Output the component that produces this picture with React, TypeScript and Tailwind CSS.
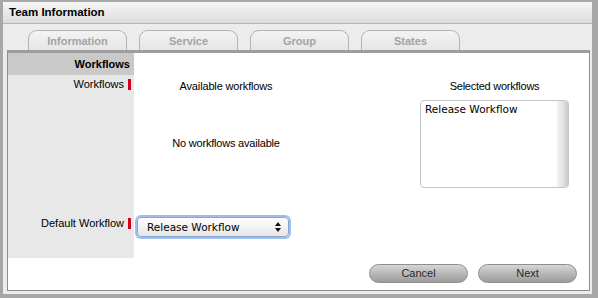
import React from "react";

const sans = { fontFamily: '"Liberation Sans", Arial, sans-serif' };
const lucida = { fontFamily: '"DejaVu Sans", "Liberation Sans", sans-serif' };

function Tab({ label }: { label: string }) {
  return (
    <div
      className="w-[99px] h-[20px] pt-[2px] rounded-t-[9px] border border-b-0 border-[#b4b4b4] bg-gradient-to-b from-[#f3f3f3] to-[#e6e6e6] flex items-center justify-center text-[11px] font-bold text-[#a3a3a3] leading-none"
      style={sans}
    >
      {label}
    </div>
  );
}

function Btn({ label }: { label: string }) {
  return (
    <div
      className="w-[99px] h-[19px] rounded-full border border-[#8f8f8f] bg-gradient-to-b from-[#d6d6d6] via-[#b8b8b8] to-[#9c9c9c] flex items-center justify-center text-[11px] text-[#2a2a2a] leading-none"
      style={sans}
    >
      {label}
    </div>
  );
}

export default function App() {
  return (
    <div className="w-[598px] h-[298px] bg-[#a7a7a7] pt-[2px] pl-[3px] pr-[6px] pb-[4px] overflow-hidden">
      <div className="w-full h-full bg-[#ececec] flex flex-col rounded-tr-[3px] rounded-tl-[2px]">
        {/* Title bar */}
        <div
          className="h-[22px] shrink-0 bg-gradient-to-b from-[#f6f6f6] to-[#dcdcdc] border-b border-[#b5b5b5] flex items-center pl-[6px] text-[11.5px] font-bold text-black leading-none"
          style={sans}
        >
          Team Information
        </div>
        {/* Tabs */}
        <div className="flex gap-[12px] pl-[25px] pt-[5px] h-[26px] shrink-0 items-end">
          <Tab label="Information" />
          <Tab label="Service" />
          <Tab label="Group" />
          <Tab label="States" />
        </div>
        {/* Panel */}
        <div className="ml-[4px] mr-[2px] h-[241px] shrink-0 border-t-[3px] border-t-[#9d9d9d] border-x border-x-[#8c8c8c] border-b border-b-[#8c8c8c] bg-white flex flex-col">
          <div className="flex h-[205px]" style={sans}>
            {/* label column */}
            <div className="w-[126px] bg-[#e8e8e8] flex flex-col text-[11px] text-black leading-none">
              <div className="h-[22px] bg-[#c9c9c9] flex items-center justify-end pr-[4px] font-bold">
                Workflows
              </div>
              <div className="mt-[4px] h-[11px] flex items-center justify-end">
                <span>Workflows</span>
                <span className="ml-[4px] mr-[3px] w-[3px] h-[11px] bg-[#d0021b]" />
              </div>
              <div className="mt-[128px] h-[11px] flex items-center justify-end">
                <span>Default Workflow</span>
                <span className="ml-[4px] mr-[3px] w-[3px] h-[11px] bg-[#d0021b]" />
              </div>
            </div>
            {/* main */}
            <div className="flex-1 flex flex-col text-[11px] text-black leading-none">
              <div className="flex mt-[28px]">
                <div className="w-[184px] flex flex-col items-center">
                  <div className="h-[12px] tracking-[-0.15px]">Available workflows</div>
                  <div className="mt-[45px] h-[12px] tracking-[-0.2px]">No workflows available</div>
                </div>
                <div className="ml-[102px] w-[149px] flex flex-col items-center">
                  <div className="h-[12px] tracking-[-0.25px]">Selected workflows</div>
                  <div className="mt-[7px] w-[149px] h-[88px] border border-[#c6c6c6] rounded-[4px] flex overflow-hidden">
                    <div className="flex-1 pl-[4px] pt-[3px] text-[10.5px]" style={lucida}>
                      Release Workflow
                    </div>
                    <div className="w-[11px] h-full bg-gradient-to-r from-[#f4f4f4] via-[#e4e4e4] to-[#c9c9c9]" />
                  </div>
                </div>
              </div>
              <div className="mt-[29px] ml-[3px] w-[152px] h-[20px] rounded-[4px] border border-[#8aa6cc] shadow-[0_0_0_2px_#9cc0ee] bg-gradient-to-b from-[#ffffff] to-[#e6e6e6] flex items-center pl-[9px] pr-[7px]">
                <span className="flex-1 text-[10.5px]" style={lucida}>Release Workflow</span>
                <svg width="6" height="10" viewBox="0 0 6 10">
                  <path d="M3 0 L6 4 L0 4 Z" fill="#111" />
                  <path d="M0 6 L6 6 L3 10 Z" fill="#111" />
                </svg>
              </div>
            </div>
          </div>
          <div className="flex-1 flex justify-end items-start pt-[6px] pr-[12px] gap-[10px]">
            <Btn label="Cancel" />
            <Btn label="Next" />
          </div>
        </div>
      </div>
    </div>
  );
}
